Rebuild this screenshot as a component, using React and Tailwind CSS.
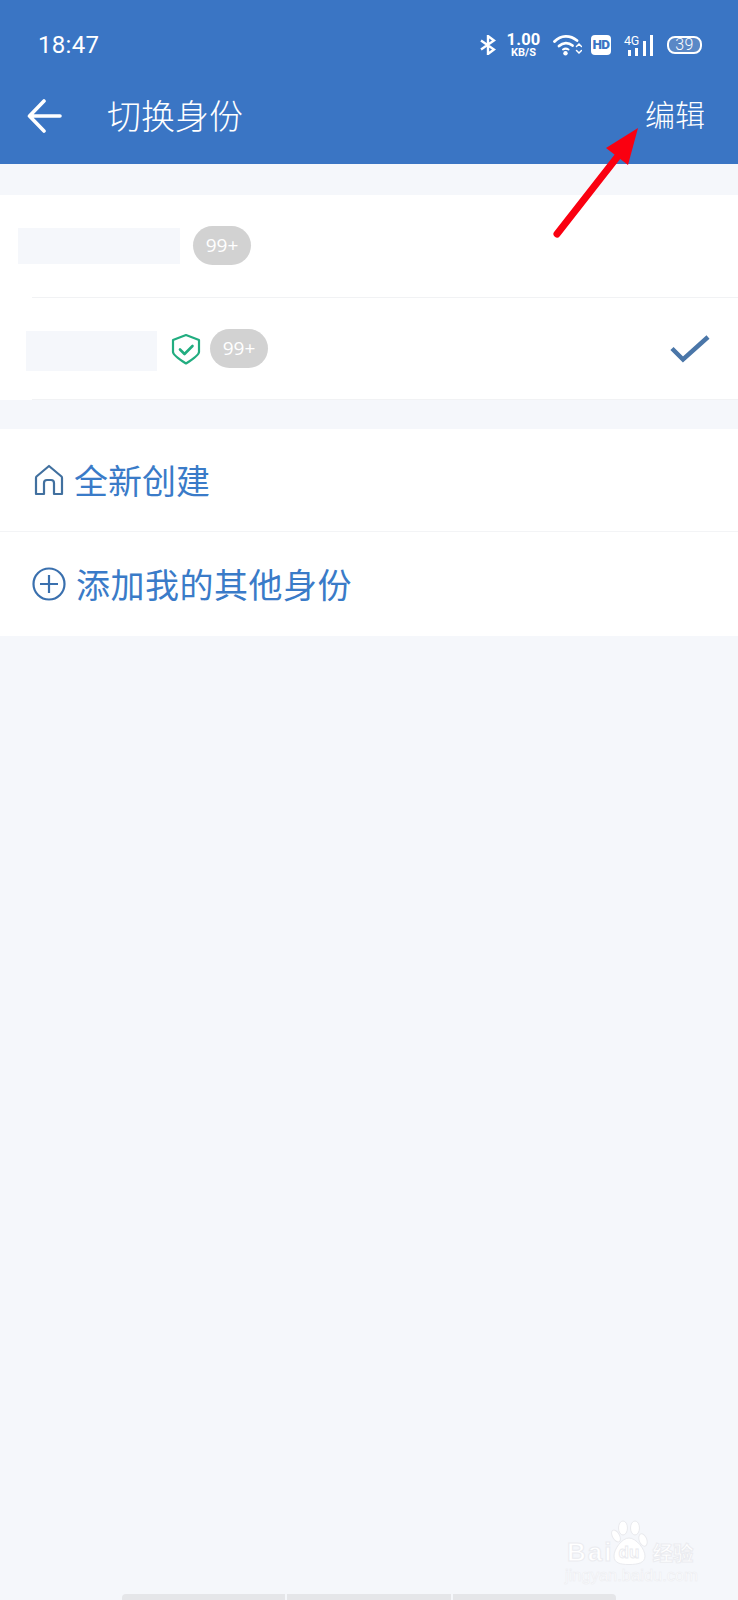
const cjk = "font-['Noto_Sans_CJK_SC','Noto_Sans',sans-serif]";

const Badge = () => (
  <span className="flex h-[39px] w-[58px] items-center justify-center rounded-full bg-[#d2d2d2] font-['Open_Sans',sans-serif] text-[19px] text-white">
    99+
  </span>
);

const StatusIcons = () => (
  <div className="flex items-center text-white">
    <svg width="16" height="20" viewBox="0 0 16 20" fill="none" stroke="white" strokeWidth="2.4">
      <path d="M1 5.500l13 9-6 4.500V1l6 4.500-13 9" />
    </svg>
    <div className="ml-[11px] flex w-[33px] flex-col items-center font-['Roboto',sans-serif] font-bold leading-none">
      <span className="text-[16.5px] leading-[14px] tracking-[0.2px]">1.00</span>
      <span className="mt-[1px] text-[11px] leading-[10px]">KB/S</span>
    </div>
    <svg className="ml-[13px]" width="29" height="22" viewBox="0 0 29 22" fill="none" stroke="white" strokeWidth="2.800" strokeLinecap="round">
      <path d="M1.500 7.500C8 .8 17 .8 24 6.500" />
      <path d="M6 12c4-3.800 9.500-3.800 13.500-.5" />
      <path d="M10 15.500c1.800-1.200 3.500-1.200 5.500 0" strokeWidth="2" />
      <circle cx="12.500" cy="19.300" r="2.200" fill="white" stroke="none" />
      <path d="M23.500 12.500l2.500-2.500 2.500 2.500" strokeWidth="1.500" />
      <path d="M23.500 16.500l2.500 2.500 2.500-2.500" strokeWidth="1.500" />
    </svg>
    <span className="ml-[9px] flex h-[20px] w-[20px] items-center justify-center rounded-[4px] bg-white font-['Roboto',sans-serif] text-[13.5px] leading-none font-black tracking-[-0.7px] text-[#3a75c4]">
      HD
    </span>
    <div className="relative ml-[13px] h-[21px] w-[29px]">
      <span className="absolute top-0 left-0 font-['Roboto',sans-serif] text-[12.5px] leading-[11px] font-normal tracking-[-0.3px]">4G</span>
      <div className="absolute right-0 bottom-0 flex items-end gap-[4.500px]">
        <i className="h-[6px] w-[3px] bg-white" />
        <i className="h-[8px] w-[3px] bg-white" />
        <i className="h-[15px] w-[3px] bg-white" />
        <i className="h-[21px] w-[3px] bg-white" />
      </div>
    </div>
    <div className="ml-[14px] flex h-[18px] w-[35px] items-center justify-center rounded-[8px] border-2 border-white bg-[#5a88c6] font-['Roboto',sans-serif] text-[16px] leading-none font-light tracking-[0.5px]">
      39
    </div>
  </div>
);

const Watermark = () => (
  <div className="absolute top-[1520px] left-[565px] w-[136px] text-white [-webkit-text-stroke:1px_#ebecf0]">
    <div className="flex h-[45px] items-end">
      <span className="mb-[1px] ml-[2px] font-['Liberation_Sans',sans-serif] text-[26px] leading-[24px] font-bold tracking-[2px]">Bai</span>
      <svg className="-ml-[2px]" width="37" height="45" viewBox="0 0 37 45" fill="white" stroke="#e9eaee" strokeWidth="1">
        <ellipse cx="12" cy="8" rx="4.500" ry="7" />
        <ellipse cx="24" cy="8" rx="4.500" ry="7" />
        <ellipse cx="32" cy="20" rx="3.800" ry="6.500" transform="rotate(-20 32 20)" />
        <ellipse cx="5" cy="16" rx="3.500" ry="6.500" transform="rotate(-30 5 16)" />
        <path d="M18 18c7 0 16 11 16 18 0 7-7 8.500-16 8.500S3 43 3 36c0-7 8-18 15-18z" />
        <text x="18" y="38" textAnchor="middle" fontFamily="Liberation Sans" fontSize="17" fontWeight="700" strokeWidth=".8">du</text>
      </svg>
      <span className={`${cjk} mb-[1px] ml-[4px] text-[20.5px] leading-[24px] font-bold`}>经验</span>
    </div>
    <div className="mt-[2px] font-['Liberation_Sans',sans-serif] text-[16.5px] leading-[16px] whitespace-nowrap [-webkit-text-stroke:0.6px_#ecedf1]">
      jingyan.baidu.com
    </div>
  </div>
);

export default function App() {
  return (
    <div className={`${cjk} relative flex h-[1600px] w-[738px] flex-col overflow-hidden bg-[#f5f7fb]`}>
      <header className="h-[164px] shrink-0 bg-[#3a75c4] text-white">
        <div className="flex h-[90px] items-center justify-between pr-[36px] pl-[38px]">
          <span className="font-['Roboto',sans-serif] text-[24px] tracking-[0.3px]">18:47</span>
          <StatusIcons />
        </div>
        <div className="flex h-[52px] items-center justify-between pr-[33px] pl-[27px]">
          <div className="flex items-center">
            <svg width="35" height="36" viewBox="0 0 35 36" fill="none" stroke="white" strokeWidth="3.600" strokeLinecap="round" strokeLinejoin="round">
              <path d="M33 18H3M17 3L2.500 18 17 33" />
            </svg>
            <span className="ml-[45px] -translate-y-[1px] text-[34px] leading-none font-light">切换身份</span>
          </div>
          <span className="-translate-y-[3px] text-[30px] leading-none font-light">编辑</span>
        </div>
      </header>

      <section className="mt-[31px] bg-white">
        <div className="flex h-[102px] items-center pl-[18px]">
          <div className="h-[36px] w-[162px] bg-[#f5f7fb]" />
          <div className="-mt-[1px] ml-[13px]"><Badge /></div>
        </div>
        <div className="ml-[32px] h-px bg-[#f1f2f4]" />
        <div className="flex h-[101px] items-center pr-[28px] pl-[26px]">
          <div className="mt-[5px] h-[40px] w-[131px] bg-[#f5f7fb]" />
          <svg className="ml-[14px]" width="30" height="32" viewBox="0 0 30 32" fill="none" stroke="#22ad80" strokeWidth="2.200" strokeLinejoin="round" strokeLinecap="round">
            <path d="M15 2l13 5v12c0 3-9 9-13 11.500C11 28 2 22 2 19V7z" />
            <path d="M9 16.500l4.500 4.500L21.500 13" strokeWidth="2.600" />
          </svg>
          <div className="ml-[9px]"><Badge /></div>
          <svg className="ml-auto" width="40" height="30" viewBox="0 0 40 30" fill="none" stroke="#4a76a8" strokeWidth="4.500">
            <path d="M2 14.500l11 11L38 3" />
          </svg>
        </div>
        <div className="ml-[32px] h-px bg-[#f1f2f4]" />
      </section>

      <section className="mt-[29px] bg-white text-[#3a7bc8]">
        <div className="flex h-[103px] items-center border-b border-[#f3f4f6] pl-[34px]">
          <svg width="30" height="32" viewBox="0 0 30 32" fill="none" stroke="#41709f" strokeWidth="2.200" strokeLinejoin="round">
            <path d="M15 2L2.500 12.500c-.5.500-.5 1-.5 1.500v16h8V19c0-2 1-3 3-3h4c2 0 3 1 3 3v11h8V14c0-.5 0-1-.5-1.500z" />
          </svg>
          <span className="ml-[10px] text-[34px] leading-none">全新创建</span>
        </div>
        <div className="flex h-[104px] items-center pl-[32px]">
          <svg width="34" height="34" viewBox="0 0 34 34" fill="none" stroke="#3a70ae" strokeWidth="2.200">
            <circle cx="17" cy="17" r="15.500" />
            <path d="M17 8v18M8 17h18" />
          </svg>
          <span className="ml-[10px] text-[34px] leading-none tracking-[0.5px]">添加我的其他身份</span>
        </div>
      </section>

      <svg className="absolute top-[125px] left-[550px]" width="90" height="116" viewBox="0 0 90 116" fill="#fa0010">
        <path d="M7 109L68 31" stroke="#fa0010" strokeWidth="7" strokeLinecap="round" fill="none" />
        <path d="M88 3L78 40 56 23z" />
      </svg>

      <Watermark />

      <div className="absolute bottom-0 left-[122px] flex h-[6px] w-[494px] gap-[2px] overflow-hidden rounded-t-[4px]">
        <i className="flex-1 bg-[#e5e6e9]" />
        <i className="flex-1 bg-[#e5e6e9]" />
        <i className="flex-1 bg-[#e5e6e9]" />
      </div>
    </div>
  );
}
